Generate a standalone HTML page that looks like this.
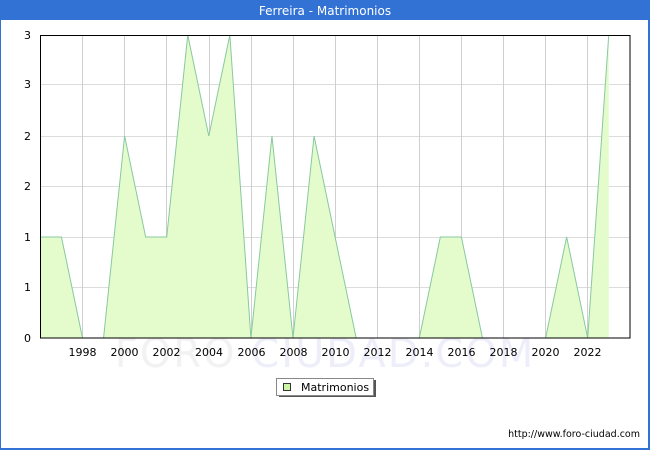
<!DOCTYPE html>
<html><head><meta charset="utf-8"><style>
html,body{margin:0;padding:0;background:#fff}
body{width:650px;height:450px;overflow:hidden;position:relative;font-family:"DejaVu Sans","Liberation Sans",sans-serif}
</style></head><body>
<svg width="650" height="450" xmlns="http://www.w3.org/2000/svg" style="position:absolute;left:0;top:0">
<rect x="0" y="0" width="650" height="450" fill="#3272d4"/>
<rect x="1" y="20" width="647" height="428" fill="#fff"/>
<text x="325" y="15" fill="#fff" font-size="12" text-anchor="middle" font-family="DejaVu Sans,sans-serif">Ferreira - Matrimonios</text>
<text x="325" y="367" fill="#f0f0f0" font-size="40" text-anchor="middle" font-family="DejaVu Sans,sans-serif" letter-spacing="2"><tspan fill="#f2f2f2">FORO</tspan> <tspan fill="#eeeefa">CIUDAD.COM</tspan></text>
<g stroke="#dcdcdc" stroke-width="1">
<line x1="40" y1="84.5" x2="630" y2="84.5"/><line x1="40" y1="136.5" x2="630" y2="136.5"/><line x1="40" y1="186.5" x2="630" y2="186.5"/><line x1="40" y1="237.5" x2="630" y2="237.5"/><line x1="40" y1="287.5" x2="630" y2="287.5"/>
</g>
<g stroke="#cfcfcf" stroke-width="1">
<line x1="82.5" y1="35" x2="82.5" y2="338"/><line x1="124.5" y1="35" x2="124.5" y2="338"/><line x1="166.5" y1="35" x2="166.5" y2="338"/><line x1="209.5" y1="35" x2="209.5" y2="338"/><line x1="251.5" y1="35" x2="251.5" y2="338"/><line x1="293.5" y1="35" x2="293.5" y2="338"/><line x1="335.5" y1="35" x2="335.5" y2="338"/><line x1="377.5" y1="35" x2="377.5" y2="338"/><line x1="419.5" y1="35" x2="419.5" y2="338"/><line x1="461.5" y1="35" x2="461.5" y2="338"/><line x1="503.5" y1="35" x2="503.5" y2="338"/><line x1="545.5" y1="35" x2="545.5" y2="338"/><line x1="587.5" y1="35" x2="587.5" y2="338"/>
</g>
<path d="M40.4,338 L40.4,237 L61.45,237 L82.5,338 L103.55,338 L124.6,136 L145.65,237 L166.7,237 L187.75,35 L208.8,136 L229.85,35 L250.9,338 L271.95,136 L293,338 L314.05,136 L335.1,237 L356.15,338 L419.3,338 L440.35,237 L461.4,237 L482.45,338 L545.6,338 L566.65,237 L587.7,338 L608.75,35 L608.75,338 Z" fill="#e4fccc" stroke="none"/>
<polyline points="40.4,237 61.45,237 82.5,338 103.55,338 124.6,136 145.65,237 166.7,237 187.75,35 208.8,136 229.85,35 250.9,338 271.95,136 293,338 314.05,136 335.1,237 356.15,338 419.3,338 440.35,237 461.4,237 482.45,338 545.6,338 566.65,237 587.7,338 608.75,35" fill="none" stroke="#88c8a0" stroke-width="1"/>
<rect x="40.5" y="35.5" width="589.5" height="302.5" fill="none" stroke="#000" stroke-width="1"/>
<g font-size="11" fill="#000" font-family="DejaVu Sans,sans-serif" text-anchor="end">
<text x="31" y="39">3</text><text x="31" y="88">3</text><text x="31" y="140">2</text><text x="31" y="190">2</text><text x="31" y="241">1</text><text x="31" y="291">1</text><text x="31" y="342">0</text>
</g>
<g font-size="11" fill="#000" font-family="DejaVu Sans,sans-serif" text-anchor="middle">
<text x="82.5" y="356">1998</text><text x="124.5" y="356">2000</text><text x="166.5" y="356">2002</text><text x="209" y="356">2004</text><text x="251.5" y="356">2006</text><text x="293.5" y="356">2008</text><text x="335.5" y="356">2010</text><text x="377.5" y="356">2012</text><text x="419.5" y="356">2014</text><text x="461.5" y="356">2016</text><text x="503.5" y="356">2018</text><text x="545.5" y="356">2020</text><text x="587.5" y="356">2022</text>
</g>
<rect x="279" y="380" width="97" height="17" fill="#555"/>
<rect x="276.5" y="378.5" width="97" height="17" fill="#fff" stroke="#888" stroke-width="1"/>
<rect x="283.5" y="383.5" width="7" height="7" fill="#ccf5a8" stroke="#333" stroke-width="1"/>
<text x="301" y="391" font-size="11" fill="#000" font-family="DejaVu Sans,sans-serif">Matrimonios</text>
<text x="640" y="437" font-size="9.5" fill="#000" text-anchor="end" font-family="DejaVu Sans,sans-serif">http://www.foro-ciudad.com</text>
</svg>
</body></html>
